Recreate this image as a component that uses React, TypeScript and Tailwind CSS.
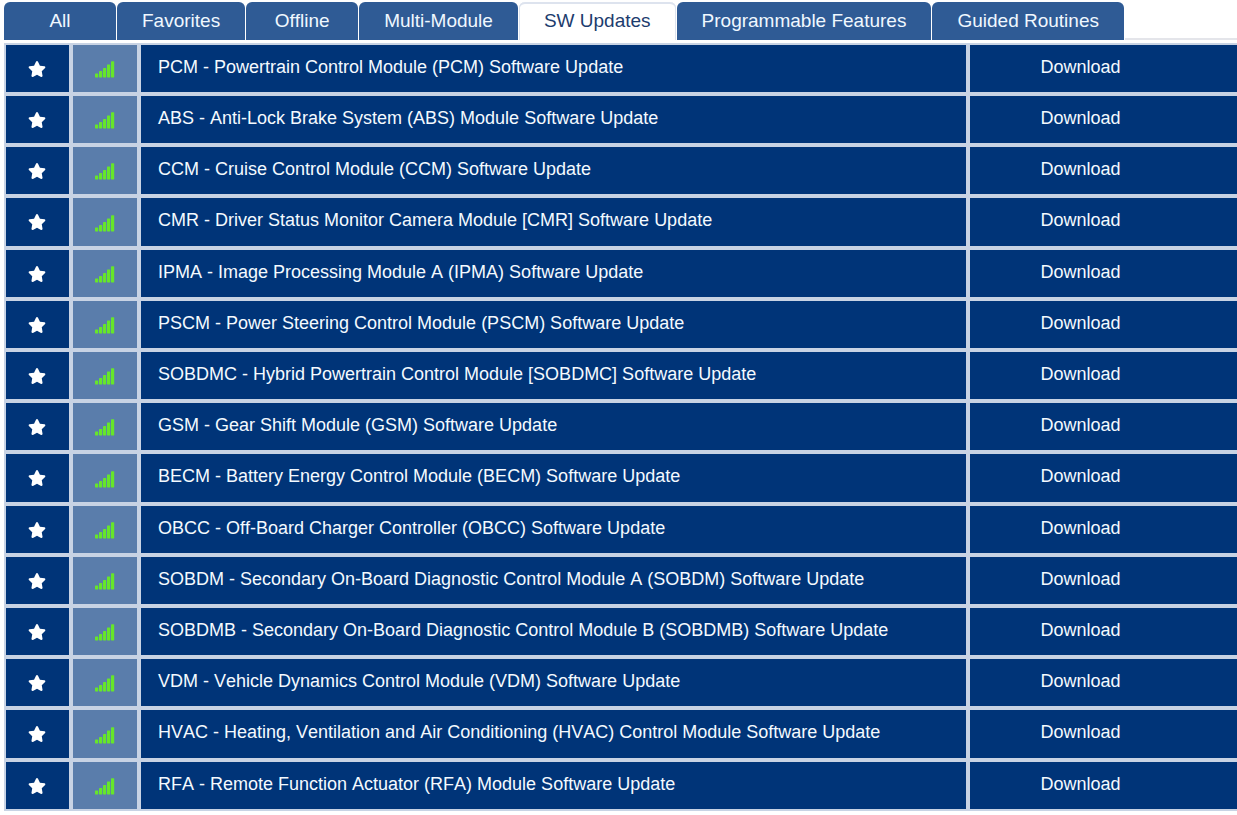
import { useState } from 'react'
import { FaStar } from 'react-icons/fa'

const TABS = [
  'All',
  'Favorites',
  'Offline',
  'Multi-Module',
  'SW Updates',
  'Programmable Features',
  'Guided Routines',
]

const UPDATES = [
  'PCM - Powertrain Control Module (PCM) Software Update',
  'ABS - Anti-Lock Brake System (ABS) Module Software Update',
  'CCM - Cruise Control Module (CCM) Software Update',
  'CMR - Driver Status Monitor Camera Module [CMR] Software Update',
  'IPMA - Image Processing Module A (IPMA) Software Update',
  'PSCM - Power Steering Control Module (PSCM) Software Update',
  'SOBDMC - Hybrid Powertrain Control Module [SOBDMC] Software Update',
  'GSM - Gear Shift Module (GSM) Software Update',
  'BECM - Battery Energy Control Module (BECM) Software Update',
  'OBCC - Off-Board Charger Controller (OBCC) Software Update',
  'SOBDM - Secondary On-Board Diagnostic Control Module A (SOBDM) Software Update',
  'SOBDMB - Secondary On-Board Diagnostic Control Module B (SOBDMB) Software Update',
  'VDM - Vehicle Dynamics Control Module (VDM) Software Update',
  'HVAC - Heating, Ventilation and Air Conditioning (HVAC) Control Module Software Update',
  'RFA - Remote Function Actuator (RFA) Module Software Update',
]

function SignalIcon() {
  return (
    <svg width="20" height="17" viewBox="0 0 20 17" fill="#66e62a" role="img" aria-label="Online">
      <rect x="0" y="12.5" width="3.2" height="4" rx="0.4" />
      <rect x="4" y="10" width="3.2" height="6.5" rx="0.4" />
      <rect x="8" y="7" width="3.2" height="9.5" rx="0.4" />
      <rect x="12" y="3.6" width="3.2" height="12.9" rx="0.4" />
      <rect x="16" y="0.3" width="3.2" height="16.2" rx="0.4" />
    </svg>
  )
}

export default function App() {
  const [active, setActive] = useState('SW Updates')

  return (
    <main className="bg-white pl-1 pt-0.5 font-['Liberation_Sans',Arial,sans-serif] [font-kerning:none]">

      {/* Tabs */}
      <div role="tablist" className="flex gap-px">
        {TABS.map((tab) => (
          <button
            key={tab}
            type="button"
            role="tab"
            aria-selected={tab === active}
            onClick={() => setActive(tab)}
            className={`h-[38px] min-w-28 shrink-0 whitespace-nowrap rounded-t-md px-[25px] text-[19px] leading-9 ${
              tab === active
                ? 'bg-white text-[#1d3c6e] shadow-[inset_0_2px_0_#dde3ee,inset_1px_0_0_#dde3ee,inset_-1px_0_0_#dde3ee]'
                : 'bg-[#2f5b95] text-[#f0f8ff]'
            }`}
          >
            {tab}
          </button>
        ))}
        <div className="flex-1 border-b-2 border-[#e4e5ea]" />
      </div>

      {/* Module list */}
      <table className="mt-[3px] w-full table-fixed border-separate border-spacing-0 border-2 border-r-0 border-[#c8d3e4] text-lg text-[#f4faff]">
        <colgroup>
          <col className="w-[67px]" />
          <col className="w-[68px]" />
          <col />
          <col className="w-[267px]" />
        </colgroup>
        <tbody className="[&>tr:last-child>td]:border-b-0 [&>tr:last-child]:h-[47px]">
          {UPDATES.map((name) => (
            <tr key={name} className="h-[51px] nth-[5n+4]:h-[52px]">
              <td className="border-b-4 border-r-4 border-[#c8d3e4] bg-[#003478] p-0">
                <button type="button" aria-label="Toggle favorite" className="flex w-full items-center justify-center pr-px">
                  <FaStar className="text-lg text-white" />
                </button>
              </td>
              <td className="border-b-4 border-r-4 border-[#c8d3e4] bg-[#5a7dab] p-0">
                <div className="flex justify-center pt-0.5">
                  <SignalIcon />
                </div>
              </td>
              <td className="truncate border-b-4 border-r-4 border-[#c8d3e4] bg-[#003478] px-[17px] pb-1 pt-0 leading-6">
                {name}
              </td>
              <td className="border-b-4 border-[#c8d3e4] bg-[#003478] pb-1 pl-0 pr-[46px] pt-0 text-center leading-6">
                <button type="button">Download</button>
              </td>
            </tr>
          ))}
        </tbody>
      </table>
    </main>
  )
}
